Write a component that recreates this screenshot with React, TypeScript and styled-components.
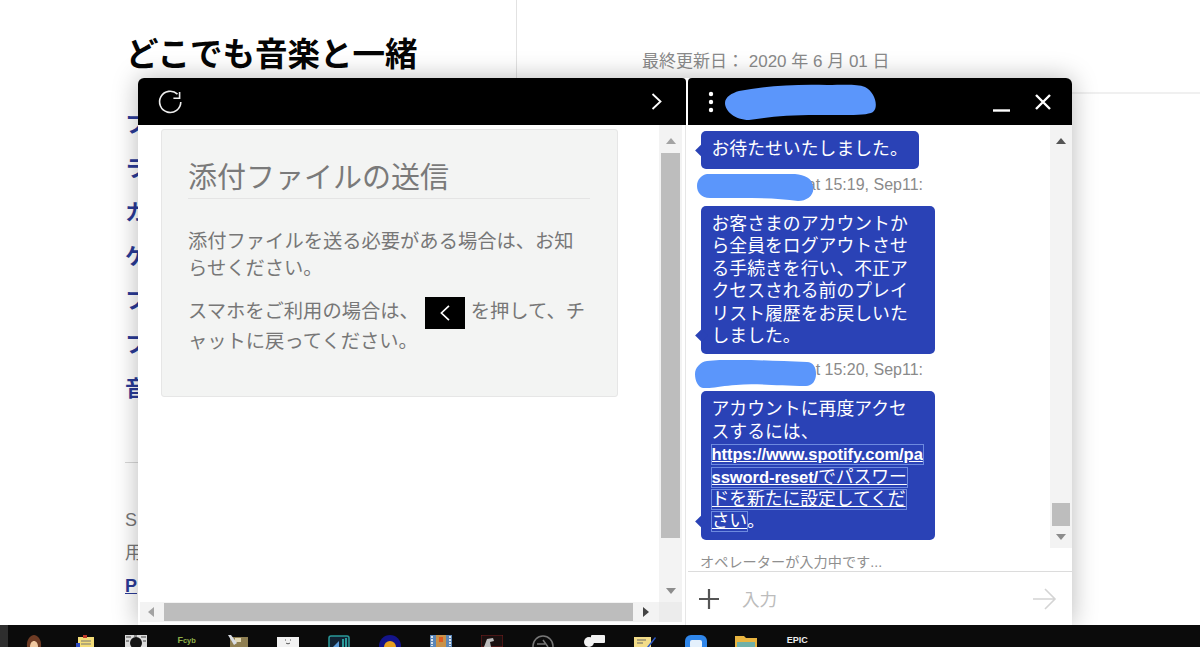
import React from "react";
import styled, { createGlobalStyle } from "styled-components";

const Global = createGlobalStyle`
  html, body { margin: 0; padding: 0; background: #fff; }
  * { box-sizing: border-box; }
  body { font-family: "Liberation Sans", "Noto Sans CJK JP", sans-serif; }
`;

const Page = styled.div`
  width: 1200px; height: 647px; display: flex; flex-direction: column; overflow: hidden;
`;
const Main = styled.main`position: relative; flex: 1; min-height: 0; overflow: hidden;`;
const TopRow = styled.header`display: flex; height: 94px;`;
const TitleCell = styled.div`
  width: 517px; padding: 33px 0 0 126px; border-right: 1px solid #e2e2e2;
`;
const Heading = styled.h1`
  margin: 0; font-size: 32.5px; line-height: 44px; font-weight: 700; color: #050505; white-space: nowrap;
`;
const DateCell = styled.div`
  flex: 1; padding: 51px 0 0 125px; border-bottom: 2px solid #f0f0f0;
  font-size: 17px; line-height: 22px; color: #8a8a8a; white-space: nowrap;
`;
const Article = styled.div`padding: 9px 0 0 125px;`;
const NavItem = styled.div`
  font-size: 22px; line-height: 44px; font-weight: 700; color: #2a3a96;
`;
const Rule = styled.hr`
  margin: 51px 0 41px; width: 40px; border: 0; border-top: 1px solid #d8d8d8;
`;
const FootLine = styled.div`font-size: 18px; line-height: 33px; color: #777;`;
const FootLink = styled.a`font-size: 18px; line-height: 33px; font-weight: 700; color: #2a3a96; text-decoration: underline;`;

const Widget = styled.section`
  position: absolute; left: 138px; top: 78px; width: 934px; height: 547px;
  display: flex; gap: 2px; background: #fff; border-radius: 6px 6px 0 0;
  box-shadow: 0 0 26px rgba(0,0,0,.28);
`;
const LeftPanel = styled.div`width: 548px; display: flex; flex-direction: column;`;
const RightPanel = styled.div`flex: 1; display: flex; flex-direction: column; min-width: 0;`;
const Bar = styled.div<{ $pad: string; $round: string }>`
  height: 47px; flex: none; background: #000; display: flex; align-items: center;
  padding: ${p => p.$pad}; border-radius: ${p => p.$round};
`;
const BarSpacer = styled.div`flex: 1;`;
const LeftBody = styled.div`
  flex: 1; min-height: 0; display: grid; grid-template-columns: 1fr 23px; grid-template-rows: 1fr 20px;
  padding: 0 3px 3px 2px; border-right: 1px solid #e6e6e6;
`;
const Viewport = styled.div`padding: 4px 0 0 21px;`;
const Card = styled.article`
  width: 457px; height: 268px; padding: 28px 27px 0 26px; background: #f3f4f3;
  border: 1px solid #e6e6e6; border-radius: 3px; color: #777;
`;
const CardTitle = styled.h2`
  margin: 0 0 29px; font-size: 29px; line-height: 40px; font-weight: 400; color: #7a7a7a;
  border-bottom: 1px solid #e4e4e4; height: 41px; white-space: nowrap;
`;
const Para = styled.p<{ $lh: number; $mb: number }>`
  margin: 0 0 ${p => p.$mb}px; font-size: 19.3px; line-height: ${p => p.$lh}px; white-space: nowrap;
`;
const InlineKey = styled.span`
  display: inline-flex; align-items: center; justify-content: center; width: 40px; height: 32px;
  margin: -3px 6px -3px 6px; vertical-align: middle; background: #000;
`;
const VScroll = styled.div<{ $top: number; $h: number }>`
  position: relative; background: #f3f3f3; height: 100%;
  &::after {
    content: ""; position: absolute; left: 2px; right: 2px; top: ${p => p.$top}px; height: ${p => p.$h}px; background: #bdbdbd;
  }
`;
const Arrow = styled.span<{ $dir: "up" | "down" | "left" | "right"; $dark?: boolean }>`
  position: absolute; width: 0; height: 0; border-style: solid; border-color: transparent;
  ${p => p.$dir === "up" && `left: 50%; top: 13px; margin-left: -5px; border-width: 0 5px 6px; border-bottom-color: ${p.$dark ? "#555" : "#a3a3a3"};`}
  ${p => p.$dir === "down" && `left: 50%; bottom: 8px; margin-left: -5px; border-width: 6px 5px 0; border-top-color: #8c8c8c;`}
  ${p => p.$dir === "left" && `left: 8px; top: 5px; border-width: 5px 6px 5px 0; border-right-color: #a3a3a3;`}
  ${p => p.$dir === "right" && `right: 10px; top: 5px; border-width: 5px 0 5px 6px; border-left-color: #444;`}
`;
const HScroll = styled.div`position: relative; background: #f3f3f3; padding: 0 26px 0 24px; height: 20px;`;
const HThumb = styled.div`height: 18px; background: #bdbdbd; margin-top: 1px;`;
const Corner = styled.div`background: #ececec;`;

const ChatBody = styled.div`flex: none; height: 423px; display: grid; grid-template-columns: 1fr 22px;`;
const Messages = styled.div`padding: 6px 0 0 13px; overflow: hidden;`;
const Bubble = styled.div<{ $w: number }>`
  position: relative; width: ${p => p.$w}px; min-height: 38px; padding: 7px 10px 7px 10.5px;
  background: #2a42b6; color: #fff; border-radius: 5px;
  font-size: 17.85px; line-height: 22.4px; white-space: nowrap;
  &::before {
    content: ""; position: absolute; left: -4px; bottom: 14px; width: 9px; height: 9px;
    background: #2a42b6; transform: rotate(45deg);
  }
`;
const TimeRow = styled.div`
  position: relative; width: 222px; height: 37px; padding-top: 7px;
  text-align: right; font-size: 16px; line-height: 18px; color: #8a8a8a; white-space: nowrap;
`;
const TimeBlob = styled.svg<{ $x: number; $y: number }>`position: absolute; left: ${p => p.$x}px; top: ${p => p.$y}px;`;
const NameBlob = styled.svg`margin-left: 11px; flex: none;`;
const MsgLink = styled.a`
  color: #fff; text-decoration: underline; font-weight: 700; font-size: 16.6px; line-height: 1;
  outline: 1px solid #6d8adf; letter-spacing: -0.1px;
`;
const MsgLinkJa = styled.span`font-weight: 400; font-size: 17.85px; line-height: 1;`;
const Typing = styled.div`
  flex: none; height: 24px; padding: 5px 0 0 12px; font-size: 14.2px; line-height: 18px; color: #8f8f8f;
  border-bottom: 1px solid #dcdcdc; overflow: hidden; white-space: nowrap;
`;
const InputRow = styled.div`flex: 1; display: flex; align-items: center; padding: 0 15px 0 11px;`;
const InputHint = styled.span`flex: 1; margin-left: 23px; font-size: 17.6px; color: #bcbcbc;`;

const Taskbar = styled.footer`
  height: 22px; flex: none; background: #0b0b0b; display: flex; align-items: flex-start; overflow: hidden;
  padding: 10px 0 0 15px; border-left: 8px solid #2e2e2e; gap: 28.9px;
`;
const TrayIcon = styled.svg`flex: none; display: block;`;
const TrayText = styled.span<{ $c: string; $s: number }>`
  flex: none; width: 22px; font-size: ${p => p.$s}px; line-height: 11px; font-weight: 700;
  color: ${p => p.$c}; white-space: nowrap; text-align: center;
`;

const Refresh = () => (
  <svg width="26" height="26" viewBox="0 0 26 26" fill="none" stroke="#eee" strokeWidth="1.6">
    <path d="M20.5 5.2A10.6 10.6 0 1 0 23.8 13" />
    <path d="M22.6 3v6.2h-6.2" />
  </svg>
);
const Chevron = ({ dir, size, w = 1.8 }: { dir: "l" | "r"; size: number; w?: number }) => (
  <svg width={size * 0.65} height={size} viewBox="0 0 11 17" fill="none" stroke="#fff" strokeWidth={w}>
    <path d={dir === "r" ? "M1.5 1l8 7.5-8 7.5" : "M9.5 1l-8 7.5 8 7.5"} />
  </svg>
);
const blue = "#5b96fb";

const tray: React.ReactNode[] = [
  <TrayIcon key="1" width="22" height="12" viewBox="0 0 22 12"><path d="M4 12C3 4 8 0 11 0s8 4 7 12z" fill="#6e3b24" /><path d="M7 12c0-4 2-6 4-6s4 2 4 6z" fill="#f0c8a0" /></TrayIcon>,
  <TrayIcon key="2" width="22" height="12" viewBox="0 0 22 12"><rect x="4" y="2" width="16" height="10" fill="#f2dc78" /><rect x="9" y="0" width="4" height="3" fill="#c03a2a" /><rect x="2" y="8" width="4" height="4" fill="#2a48c0" /><path d="M7 6h10M7 9h10" stroke="#777" /></TrayIcon>,
  <TrayIcon key="3" width="22" height="12" viewBox="0 0 22 12"><rect width="22" height="12" fill="#dcdcdc" /><circle cx="11" cy="8" r="6" fill="#151515" /><path d="M1 2h5M9 1h3M16 2h5M1 6h3M18 6h3" stroke="#444" /></TrayIcon>,
  <TrayText key="4" $c="#8fb04a" $s={9}>F<small>cyb</small></TrayText>,
  <TrayIcon key="5" width="22" height="12" viewBox="0 0 22 12"><rect x="3" y="2" width="18" height="10" fill="#8f7f52" /><rect x="8" y="3" width="6" height="4" fill="#e2d8b4" /><path d="M1 0l6 10 3-2-6-8z" fill="#d8dce2" /></TrayIcon>,
  <TrayIcon key="6" width="22" height="12" viewBox="0 0 22 12"><rect y="2" width="22" height="10" fill="#f2f2f2" /><path d="M8 5h1M13 5h1M9 8c1 1 3 1 4 0" stroke="#555" fill="none" /></TrayIcon>,
  <TrayIcon key="7" width="22" height="12" viewBox="0 0 22 12"><rect x="1" y="1" width="20" height="13" rx="2" fill="#123" stroke="#2a9a9a" strokeWidth="1.5" /><path d="M5 12l6-6v6z" fill="#5a9ad8" /><rect x="14" y="4" width="2" height="8" fill="#2a9a9a" /><rect x="17" y="3" width="2" height="9" fill="#2a9a9a" /></TrayIcon>,
  <TrayIcon key="8" width="22" height="12" viewBox="0 0 22 12"><circle cx="11" cy="11" r="11" fill="#14148a" /><circle cx="11" cy="12" r="6" fill="#e8a020" /></TrayIcon>,
  <TrayIcon key="9" width="22" height="12" viewBox="0 0 22 12"><rect width="22" height="12" fill="#5a86b8" /><rect x="6" y="0" width="10" height="12" fill="#c8924a" /><rect x="9" y="2" width="4" height="5" fill="#e05a20" /><path d="M2 1v10M20 1v10" stroke="#dbe4ee" strokeDasharray="2 1" strokeWidth="2" /></TrayIcon>,
  <TrayIcon key="10" width="22" height="12" viewBox="0 0 22 12"><rect width="22" height="12" fill="#1a1010" stroke="#7a1c1c" /><path d="M3 12l3-8 6-1 1 3-4 1 1 5z" fill="#bbb" /></TrayIcon>,
  <TrayIcon key="11" width="22" height="12" viewBox="0 0 22 12" fill="none" stroke="#777" strokeWidth="1.5"><circle cx="11" cy="11" r="10" /><path d="M11 5l5 7M5 9h8" /></TrayIcon>,
  <TrayIcon key="12" width="22" height="12" viewBox="0 0 22 12"><rect x="8" y="0" width="14" height="8" rx="1" fill="#f2f2f2" /><circle cx="6" cy="7" r="5" fill="#f2f2f2" /></TrayIcon>,
  <TrayIcon key="13" width="22" height="12" viewBox="0 0 22 12"><rect y="2" width="17" height="10" fill="#f2dc88" /><path d="M3 5h9M3 8h6" stroke="#666" /><path d="M13 12l8-10 1 1-7 9z" fill="#2a58c8" /></TrayIcon>,
  <TrayIcon key="14" width="22" height="12" viewBox="0 0 22 12"><rect width="22" height="18" rx="6" fill="#2f86ea" /><rect x="5" y="5" width="12" height="8" rx="2" fill="#e4f0fc" /></TrayIcon>,
  <TrayIcon key="15" width="22" height="12" viewBox="0 0 22 12"><path d="M0 1h9l2 2h11v9H0z" fill="#e8b440" /><rect x="2" y="7" width="18" height="5" fill="#6fb0a8" /></TrayIcon>,
  <TrayText key="16" $c="#eee" $s={9}>EPIC</TrayText>,
];

export default function App() {
  return (
    <Page>
      <Global />
      <Main>
        <TopRow>
          <TitleCell><Heading>どこでも音楽と一緒</Heading></TitleCell>
          <DateCell>最終更新日： 2020 年 6 月 01 日</DateCell>
        </TopRow>
        <Article>
          {["フ", "ラ", "カ", "ケ", "フ", "フ", "音"].map((t, i) => <NavItem key={i}>{t}</NavItem>)}
          <Rule />
          <FootLine>S</FootLine>
          <FootLine>用</FootLine>
          <FootLink>P</FootLink>
        </Article>

        <Widget>
          <LeftPanel>
            <Bar $pad="0 24px 0 19px" $round="6px 4px 0 0">
              <Refresh />
              <BarSpacer />
              <Chevron dir="r" size={17} />
            </Bar>
            <LeftBody>
              <Viewport>
                <Card>
                  <CardTitle>添付ファイルの送信</CardTitle>
                  <Para $lh={27} $mb={15}>添付ファイルを送る必要がある場合は、お知<br />らせください。</Para>
                  <Para $lh={30} $mb={0}>
                    スマホをご利用の場合は、
                    <InlineKey><Chevron dir="l" size={16} /></InlineKey>
                    を押して、チ<br />ャットに戻ってください。
                  </Para>
                </Card>
              </Viewport>
              <VScroll $top={28} $h={385}>
                <Arrow $dir="up" />
                <Arrow $dir="down" />
              </VScroll>
              <HScroll>
                <Arrow $dir="left" />
                <HThumb />
                <Arrow $dir="right" />
              </HScroll>
              <Corner />
            </LeftBody>
          </LeftPanel>

          <RightPanel>
            <Bar $pad="0 20px 0 20px" $round="4px 6px 0 0">
              <svg width="6" height="22" viewBox="0 0 6 22" fill="#fff">
                <circle cx="3" cy="3" r="2.2" /><circle cx="3" cy="11" r="2.2" /><circle cx="3" cy="19" r="2.2" />
              </svg>
              <NameBlob width="152" height="36" viewBox="0 0 152 36">
                <path fill={blue} d="M14 7C40 2 70 0 102 1c18 0 30-1 38 2 10 5 14 20 8 25-7 4-26 3-56 3-30 0-48 2-68 5C10 36 0 27 0 19 0 13 7 9 14 7z" />
              </NameBlob>
              <BarSpacer />
              <svg width="18" height="26" viewBox="0 0 18 26" stroke="#fff" strokeWidth="2.4"><path d="M0 21.5h17" /></svg>
              <svg width="18" height="18" viewBox="0 0 18 18" stroke="#fff" strokeWidth="2.4" style={{ marginLeft: 23 }}><path d="M2 2l14 14M16 2L2 16" /></svg>
            </Bar>
            <ChatBody>
              <Messages>
                <Bubble $w={218}>お待たせいたしました。</Bubble>
                <TimeRow>
                  at 15:19, Sep11:
                  <TimeBlob $x={-4} $y={5} width="118" height="27" viewBox="0 0 118 27">
                    <path fill={blue} d="M10 0c30-1 62-1 88 0 10 1 17 4 18 12 2 9-6 15-15 15-25-4-60-3-88-3C4 24 0 18 0 12 0 6 4 1 10 0z" />
                  </TimeBlob>
                </TimeRow>
                <Bubble $w={234}>
                  お客さまのアカウントか<br />ら全員をログアウトさせ<br />る手続きを行い、不正ア<br />クセスされる前のプレイ<br />リスト履歴をお戻しいた<br />しました。
                </Bubble>
                <TimeRow>
                  at 15:20, Sep11:
                  <TimeBlob $x={-6} $y={6} width="121" height="28" viewBox="0 0 121 28">
                    <path fill={blue} d="M12 1c25-3 60 0 100 1 6 0 9 5 9 12 0 7-4 12-10 12-30 0-50-3-70-1-15 1-28 4-33 3C3 27 0 21 0 14 0 8 5 2 12 1z" />
                  </TimeBlob>
                </TimeRow>
                <Bubble $w={234}>
                  アカウントに再度アクセ<br />スするには、<br />
                  <MsgLink>https://www.spotify.com/pa<br />ssword-reset/<MsgLinkJa>でパスワー</MsgLinkJa><br /><MsgLinkJa>ドを新たに設定してくだ</MsgLinkJa><br /><MsgLinkJa>さい</MsgLinkJa></MsgLink>。
                </Bubble>
              </Messages>
              <VScroll $top={378} $h={23}>
                <Arrow $dir="up" $dark />
                <Arrow $dir="down" />
              </VScroll>
            </ChatBody>
            <Typing>オペレーターが入力中です...</Typing>
            <InputRow>
              <svg width="20" height="20" viewBox="0 0 20 20" stroke="#555" strokeWidth="2.2"><path d="M10 0v20M0 10h20" /></svg>
              <InputHint>入力</InputHint>
              <svg width="24" height="22" viewBox="0 0 24 22" fill="none" stroke="#d4d4d4" strokeWidth="1.6"><path d="M0 11h22M12 1l10 10-10 10" /></svg>
            </InputRow>
          </RightPanel>
        </Widget>
      </Main>
      <Taskbar>{tray}</Taskbar>
    </Page>
  );
}
